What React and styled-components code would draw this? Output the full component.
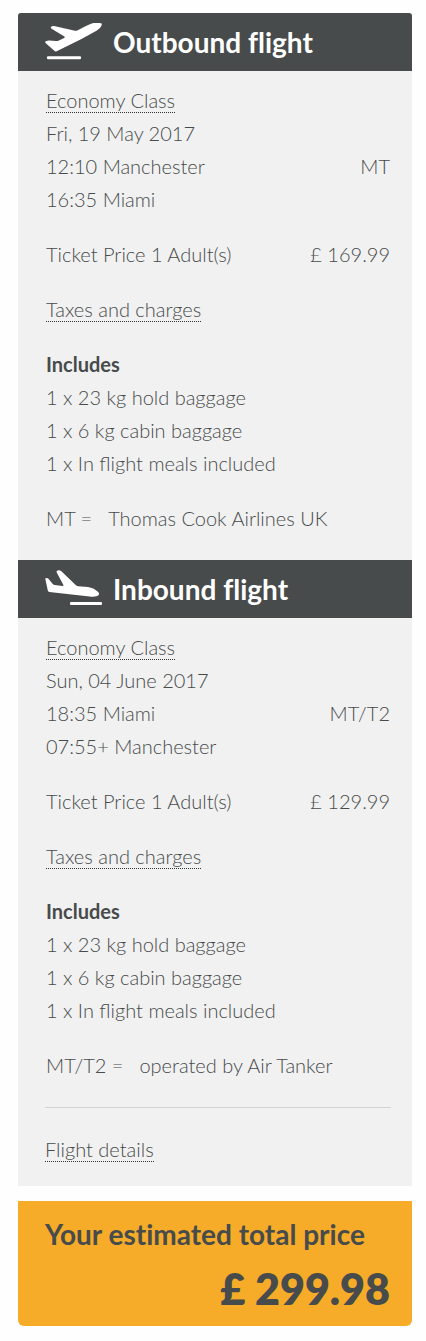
import React from 'react'
import styled, { createGlobalStyle } from 'styled-components'

const flights = [
	{
		direction: 'out',
		title: 'Outbound flight',
		cabin: 'Economy Class',
		date: 'Fri, 19 May 2017',
		departure: '12:10 Manchester',
		arrival: '16:35 Miami',
		carrier: 'MT',
		price: '£ 169.99',
		operator: 'Thomas Cook Airlines UK',
	},
	{
		direction: 'in',
		title: 'Inbound flight',
		cabin: 'Economy Class',
		date: 'Sun, 04 June 2017',
		departure: '18:35 Miami',
		arrival: '07:55+ Manchester',
		carrier: 'MT/T2',
		price: '£ 129.99',
		operator: 'operated by Air Tanker',
	},
];

const extras = ['1 x 23 kg hold baggage', '1 x 6 kg cabin baggage', '1 x In flight meals included'];

const TakeOffIcon = () => (
	<Icon viewBox="0 1 57 38" aria-hidden="true">
		<path d="M56.7 1.6C54.5 0.6 49.5 0.6 46.7 1.4C43.5 2.4 40.5 4.2 38 5.5L32.3 8.5Q31.3 8.9 30 8.7L9 4.1Q7.4 3.8 6.4 4.6Q5.2 5.8 6.6 6.8L19.4 14.6Q20.2 15.3 19.2 15.9L13.4 18.8Q12 19.3 10.4 18.9L4.5 18.4Q2.4 18.3 0.8 19.3Q-0.4 20.2 0.8 21.2L9.3 28.8Q10.3 29.7 11.7 29.2L36 17.2L51.5 8.8C54.5 7 57.4 3.8 56.7 1.6Z" />
		<rect x="2" y="34.3" width="34" height="3" rx="1" />
	</Icon>
);

const LandingIcon = () => (
	<Icon viewBox="0 0 57 38" aria-hidden="true">
		<path d="M0.2 8.6Q1 7.6 2.6 8.2Q3.8 8.8 4.6 10.2L8 14.3Q8.6 15 9.8 15.1L17.4 15.9Q18.8 16 18.3 14.7L11.7 2.4Q11 0.9 12.6 0.4Q14.8 0 16.4 1.3L30.4 14.8Q31.6 16 33 16.2L43 17C48 17.8 52 20.6 53.6 22.6C54.8 24.3 53.8 25.7 51.6 26.3C49.4 26.9 46.8 26.8 44.6 26.5L4.4 21.9Q3 21.7 2.8 20.4Z" />
		<rect x="25" y="32" width="32" height="3" rx="1" />
	</Icon>
);

const Flight = ({ flight, children }) => (
	<section>
		<Header>
			{flight.direction === 'out' ? <TakeOffIcon /> : <LandingIcon />}
			<Title>{flight.title}</Title>
		</Header>
		<Details>
			<Group>
				<Row><DottedLink href="#cabin">{flight.cabin}</DottedLink></Row>
				<Row>{flight.date}</Row>
				<Row>
					<span>{flight.departure}</span>
					<span>{flight.carrier}</span>
				</Row>
				<Row>{flight.arrival}</Row>
			</Group>
			<Row>
				<span>Ticket Price 1 Adult(s)</span>
				<span>{flight.price}</span>
			</Row>
			<Row><DottedLink href="#taxes">Taxes and charges</DottedLink></Row>
			<Group>
				<Subtitle>Includes</Subtitle>
				<List>
					{extras.map(extra => <li key={extra}>{extra}</li>)}
				</List>
			</Group>
			<Operator>
				<span>{flight.carrier} =</span>
				<span>{flight.operator}</span>
			</Operator>
		</Details>
		{children}
	</section>
);

export default function App() {
	return (
		<Page>
			<GlobalStyle />
			<Summary>
				<Flight flight={flights[0]} />
				<Flight flight={flights[1]}>
					<More>
						<DottedLink href="#details">Flight details</DottedLink>
					</More>
				</Flight>
			</Summary>
			<Total>
				<Title>Your estimated total price</Title>
				<TotalPrice>£ 299.98</TotalPrice>
			</Total>
		</Page>
	)
}

const GlobalStyle = createGlobalStyle`
	body {
		margin: 0;
		background: #fefefe;
	}
`;

const Page = styled.main`
	padding: 13px 14px 15px 18px;
	font-family: Lato, 'Liberation Sans', sans-serif;
	font-size: 20px;
	font-weight: 300;
	line-height: 33px;
	color: #474b4b;
`;

const Summary = styled.div`
	overflow: hidden;
	border-radius: 3px 3px 0 0;
	background: #f1f1f1;
`;

const Header = styled.header`
	display: flex;
	align-items: center;
	gap: 11px;
	height: 58px;
	padding: 0 27px;
	background: #474b4b;
	color: #fff;
`;

const Icon = styled.svg`
	width: 57px;
	height: 38px;
	flex-shrink: 0;
	fill: currentColor;
`;

const Title = styled.h2`
	margin: 0;
	font-size: 28px;
	font-weight: 700;
	line-height: 36px;
	font-variant-ligatures: none;
`;

const Details = styled.div`
	display: flex;
	flex-direction: column;
	gap: 22px;
	padding: 13px 22px 25px 28px;
`;

const Group = styled.div`
	display: flex;
	flex-direction: column;
`;

const Row = styled.div`
	display: flex;
	justify-content: space-between;
`;

const DottedLink = styled.a`
	line-height: 24px;
	margin: 4px 0;
	border-bottom: 1px dotted #2f3232;
	color: inherit;
	text-decoration: none;
`;

const Subtitle = styled.h3`
	margin: 0;
	font-size: 20px;
	font-weight: 700;
`;

const List = styled.ul`
	margin: 0;
	padding: 0;
	list-style: none;
`;

const Operator = styled.div`
	display: flex;
	gap: 16px;
`;

const More = styled.div`
	display: flex;
	margin: 0 21px 0 27px;
	padding: 25px 0 20px;
	border-top: 1px solid #d2d3d3;
`;

const Total = styled.section`
	margin-top: 15px;
	padding: 15px 22px 0 27px;
	border-radius: 0 0 6px 6px;
	background: #f6ab29;
`;

const TotalPrice = styled.p`
	margin: 0;
	font-size: 43px;
	font-weight: 800;
	line-height: 74px;
	text-align: right;
`;
